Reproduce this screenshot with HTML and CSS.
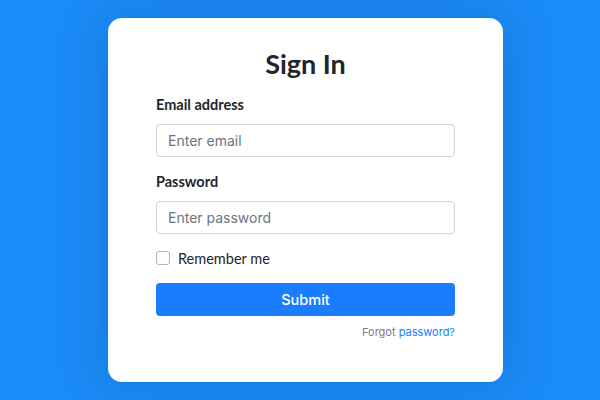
FILE: index.html
```html
<!DOCTYPE html>
<html>
<head>
<meta charset="utf-8">
<link rel="stylesheet" href="styles.css">
</head>
<body>
<div class="card">
  <h1 class="title">Sign In</h1>
  <form class="form">
    <label class="label" for="email">Email address</label>
    <input class="input" id="email" type="email" placeholder="Enter email">
    <label class="label label-gap" for="pw">Password</label>
    <input class="input" id="pw" type="password" placeholder="Enter password">
    <label class="check-row"><span class="check"></span><span class="check-text">Remember me</span></label>
    <button class="btn" type="button">Submit</button>
    <p class="forgot">Forgot <a href="#" class="link">password?</a></p>
  </form>
</div>
</body>
</html>
```
FILE: styles.css
```css
html, body {
  margin: 0;
  height: 100%;
}
body {
  background: #1b8bf7;
  display: flex;
  align-items: center;
  justify-content: center;
  padding-left: 11px;
  box-sizing: border-box;
  font-family: Lato, "Noto Sans", sans-serif;
}
.card {
  width: 395px;
  height: 364px;
  box-sizing: border-box;
  background: #fff;
  border-radius: 14px;
  padding: 30px 48px 0;
  box-shadow: 0 0 50px rgba(10, 60, 120, 0.25);
}
.title {
  margin: 0;
  font-size: 27px;
  line-height: 32px;
  font-weight: 700;
  text-align: center;
  color: #222529;
}
.form {
  display: flex;
  flex-direction: column;
  margin-top: 15px;
}
.label {
  font-size: 14.5px;
  line-height: 20px;
  font-weight: 700;
  color: #222529;
}
.label-gap {
  margin-top: 15px;
}
.input {
  margin: 9px 0 0;
  height: 33px;
  box-sizing: border-box;
  border: 1px solid #ced4da;
  border-radius: 4px;
  padding: 0 11px;
  font-family: Inter, "Liberation Sans", sans-serif;
  font-size: 14px;
  color: #495057;
  outline: none;
}
.input::placeholder {
  color: #6c757d;
}
.check-row {
  margin-top: 14px;
  display: flex;
  align-items: center;
  height: 20px;
}
.check {
  width: 14px;
  height: 14px;
  box-sizing: border-box;
  border: 1px solid #adb5bd;
  border-radius: 3px;
  margin-right: 8px;
}
.check-text {
  font-size: 14.5px;
  color: #222529;
}
.btn {
  margin-top: 15px;
  height: 33px;
  border: none;
  border-radius: 4px;
  background: #1a7dff;
  color: #fff;
  font-family: Inter, "Liberation Sans", sans-serif;
  font-size: 14.5px;
  font-weight: 500;
}
.forgot {
  margin: 9px 0 0;
  text-align: right;
  font-family: Inter, "Liberation Sans", sans-serif;
  font-size: 11px;
  line-height: 14px;
  color: #7a8087;
}
.link {
  color: #1a7dff;
  text-decoration: none;
}
```
